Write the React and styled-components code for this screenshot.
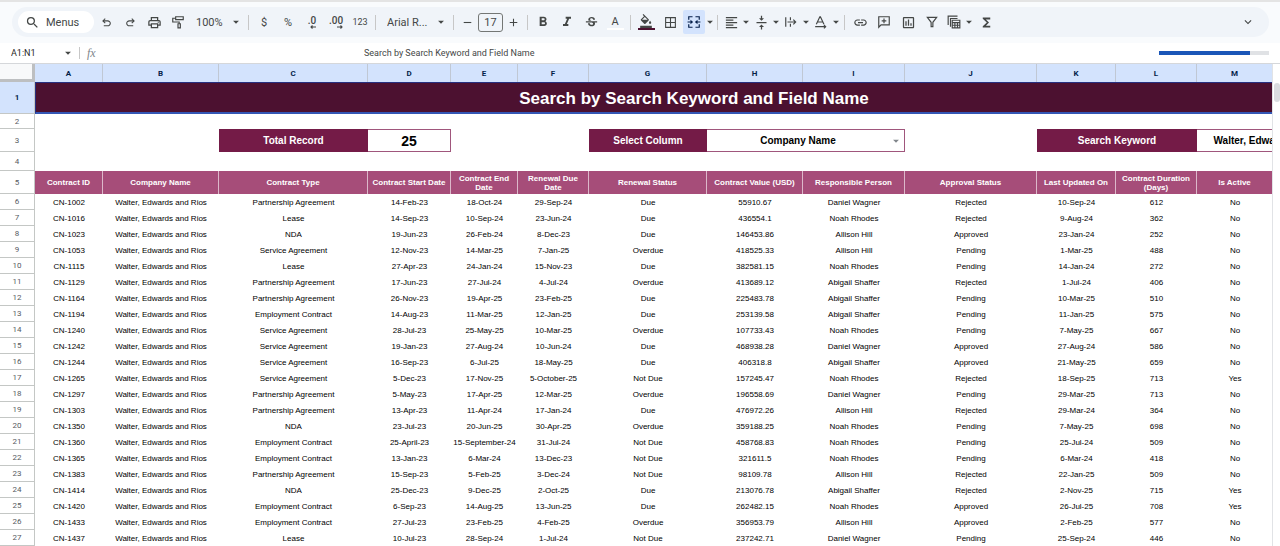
import React, { useState } from 'react'
import styled, { createGlobalStyle } from 'styled-components'
import {
    MdSearch, MdOutlinePrint, MdArrowDropDown, MdRemove, MdAdd,
    MdFormatBold, MdFormatItalic, MdStrikethroughS, MdFormatColorFill, MdFormatAlignLeft,
    MdVerticalAlignCenter, MdInsertLink, MdOutlineInsertChart,
    MdFunctions, MdExpandMore,
} from 'react-icons/md'

const columns = [
    { letter: 'A', width: 68, title: 'Contract ID' },
    { letter: 'B', width: 116, title: 'Company Name' },
    { letter: 'C', width: 149, title: 'Contract Type' },
    { letter: 'D', width: 83, title: 'Contract Start Date' },
    { letter: 'E', width: 67, title: 'Contract End Date' },
    { letter: 'F', width: 71, title: 'Renewal Due Date' },
    { letter: 'G', width: 118, title: 'Renewal Status' },
    { letter: 'H', width: 96, title: 'Contract Value (USD)' },
    { letter: 'I', width: 102, title: 'Responsible Person' },
    { letter: 'J', width: 132, title: 'Approval Status' },
    { letter: 'K', width: 79, title: 'Last Updated On' },
    { letter: 'L', width: 81, title: 'Contract Duration (Days)' },
    { letter: 'M', width: 76, title: 'Is Active' },
    { letter: '', width: 80, title: '' },
]

const company = 'Walter, Edwards and Rios'

const records = [
    ['CN-1002', 'Partnership Agreement', '14-Feb-23', '18-Oct-24', '29-Sep-24', 'Due', '55910.67', 'Daniel Wagner', 'Rejected', '10-Sep-24', '612', 'No'],
    ['CN-1016', 'Lease', '14-Sep-23', '10-Sep-24', '23-Jun-24', 'Due', '436554.1', 'Noah Rhodes', 'Rejected', '9-Aug-24', '362', 'No'],
    ['CN-1023', 'NDA', '19-Jun-23', '26-Feb-24', '8-Dec-23', 'Due', '146453.86', 'Allison Hill', 'Approved', '23-Jan-24', '252', 'No'],
    ['CN-1053', 'Service Agreement', '12-Nov-23', '14-Mar-25', '7-Jan-25', 'Overdue', '418525.33', 'Allison Hill', 'Pending', '1-Mar-25', '488', 'No'],
    ['CN-1115', 'Lease', '27-Apr-23', '24-Jan-24', '15-Nov-23', 'Due', '382581.15', 'Noah Rhodes', 'Pending', '14-Jan-24', '272', 'No'],
    ['CN-1129', 'Partnership Agreement', '17-Jun-23', '27-Jul-24', '4-Jul-24', 'Overdue', '413689.12', 'Abigail Shaffer', 'Rejected', '1-Jul-24', '406', 'No'],
    ['CN-1164', 'Partnership Agreement', '26-Nov-23', '19-Apr-25', '23-Feb-25', 'Due', '225483.78', 'Abigail Shaffer', 'Pending', '10-Mar-25', '510', 'No'],
    ['CN-1194', 'Employment Contract', '14-Aug-23', '11-Mar-25', '12-Jan-25', 'Due', '253139.58', 'Abigail Shaffer', 'Pending', '11-Jan-25', '575', 'No'],
    ['CN-1240', 'Service Agreement', '28-Jul-23', '25-May-25', '10-Mar-25', 'Overdue', '107733.43', 'Noah Rhodes', 'Pending', '7-May-25', '667', 'No'],
    ['CN-1242', 'Service Agreement', '19-Jan-23', '27-Aug-24', '10-Jun-24', 'Due', '468938.28', 'Daniel Wagner', 'Approved', '27-Aug-24', '586', 'No'],
    ['CN-1244', 'Service Agreement', '16-Sep-23', '6-Jul-25', '18-May-25', 'Due', '406318.8', 'Abigail Shaffer', 'Approved', '21-May-25', '659', 'No'],
    ['CN-1265', 'Service Agreement', '5-Dec-23', '17-Nov-25', '5-October-25', 'Not Due', '157245.47', 'Noah Rhodes', 'Rejected', '18-Sep-25', '713', 'Yes'],
    ['CN-1297', 'Partnership Agreement', '5-May-23', '17-Apr-25', '12-Mar-25', 'Overdue', '196558.69', 'Daniel Wagner', 'Pending', '29-Mar-25', '713', 'No'],
    ['CN-1303', 'Partnership Agreement', '13-Apr-23', '11-Apr-24', '17-Jan-24', 'Due', '476972.26', 'Allison Hill', 'Rejected', '29-Mar-24', '364', 'No'],
    ['CN-1350', 'NDA', '23-Jul-23', '20-Jun-25', '30-Apr-25', 'Overdue', '359188.25', 'Noah Rhodes', 'Pending', '7-May-25', '698', 'No'],
    ['CN-1360', 'Employment Contract', '25-April-23', '15-September-24', '31-Jul-24', 'Not Due', '458768.83', 'Noah Rhodes', 'Pending', '25-Jul-24', '509', 'No'],
    ['CN-1365', 'Employment Contract', '13-Jan-23', '6-Mar-24', '13-Dec-23', 'Not Due', '321611.5', 'Noah Rhodes', 'Pending', '6-Mar-24', '418', 'No'],
    ['CN-1383', 'Partnership Agreement', '15-Sep-23', '5-Feb-25', '3-Dec-24', 'Not Due', '98109.78', 'Allison Hill', 'Rejected', '22-Jan-25', '509', 'No'],
    ['CN-1414', 'NDA', '25-Dec-23', '9-Dec-25', '2-Oct-25', 'Due', '213076.78', 'Abigail Shaffer', 'Rejected', '2-Nov-25', '715', 'Yes'],
    ['CN-1420', 'Employment Contract', '6-Sep-23', '14-Aug-25', '13-Jun-25', 'Due', '262482.15', 'Noah Rhodes', 'Approved', '26-Jul-25', '708', 'Yes'],
    ['CN-1433', 'Employment Contract', '27-Jul-23', '23-Feb-25', '4-Feb-25', 'Overdue', '356953.79', 'Allison Hill', 'Approved', '2-Feb-25', '577', 'No'],
    ['CN-1437', 'Lease', '10-Jul-23', '28-Sep-24', '1-Jul-24', 'Not Due', '237242.71', 'Daniel Wagner', 'Pending', '25-Sep-24', '446', 'No'],
]

const UndoIcon = () => (
    <svg viewBox="0 -960 960 960" width="13" height="13" fill="currentColor">
        <path d="M280-200v-80h284q63 0 109.5-40T720-420q0-60-46.5-100T564-560H312l104 104-56 56-200-200 200-200 56 56-104 104h252q97 0 166.5 63T800-420q0 94-69.5 157T564-200H280Z" />
    </svg>
)

const RedoIcon = () => (
    <svg viewBox="0 -960 960 960" width="13" height="13" fill="currentColor">
        <path d="M396-200q-97 0-166.5-63T160-420q0-94 69.5-157T396-640h252L544-744l56-56 200 200-200 200-56-56 104-104H396q-63 0-109.5 40T240-420q0 60 46.5 100T396-280h284v80H396Z" />
    </svg>
)

const LineIcon = ({ size = 14, stroke = 2, children }) => (
    <svg viewBox="0 0 24 24" width={size} height={size} fill="none" stroke="currentColor" strokeWidth={stroke}>
        {children}
    </svg>
)

const PaintIcon = () => (
    <LineIcon><path d="M8 3h13v5H8zM8 5.500H3V12h11v3M12 15h4v7h-4z" /></LineIcon>
)

const BordersIcon = () => (
    <LineIcon size={13}><path d="M3 3h18v18H3zM12 3v18M3 12h18" /></LineIcon>
)

const MergeIcon = () => (
    <LineIcon>
        <path d="M9.500 3H3v5M14.500 3H21v5M9.500 21H3v-5M14.500 21H21v-5M1 12h6M23 12h-6" />
        <path d="M6 8l4.500 4L6 16zM18 8l-4.500 4 4.500 4z" fill="currentColor" stroke="none" />
    </LineIcon>
)

const WrapIcon = () => (
    <LineIcon><path d="M3 4v16M11 4v5M11 15v5M6 12h14M16 8l4 4-4 4" /></LineIcon>
)

const RotateIcon = () => (
    <LineIcon>
        <path d="M4 16L10 3h1l6 13M6 12h9M2 20h18M17 17l3 3-3 3" />
    </LineIcon>
)

const CommentIcon = () => (
    <LineIcon><path d="M3 21V3h18v14H7zM12 6v8M8 10h8" /></LineIcon>
)

const FilterIcon = () => (
    <LineIcon><path d="M4 4h16l-6.500 8.500V20h-3v-7.500z" /></LineIcon>
)

const TableViewIcon = () => (
    <LineIcon>
        <path d="M2 17V2h16M6 20V6h12M9 9h13v13H9zM9 13h13M9 17.500h13M13.500 13v9M18 13v9" />
    </LineIcon>
)

const DecimalIcon = ({ text, right }) => (
    <Decimal>
        {text}
        <svg viewBox="0 0 12 8" width="6" height="4" fill="none" stroke="currentColor" strokeWidth="2.200">
            <path d={right ? 'M0 4h10M7 1l3 3-3 3' : 'M12 4H2M5 1L2 4l3 3'} />
        </svg>
    </Decimal>
)

const Split = ({ label, icon }) => (
    <SplitTool>
        <ToolButton $width={20} aria-label={label}>{icon}</ToolButton>
        <ToolButton $width={9} aria-label={`${label} options`}><MdArrowDropDown size={14} /></ToolButton>
    </SplitTool>
)

function Toolbar() {
    return (
        <ToolbarArea>
            <Pill>
                <MenuSearch><MdSearch size={15} />Menus</MenuSearch>
                <ToolButton aria-label="Undo"><UndoIcon /></ToolButton>
                <ToolButton aria-label="Redo"><RedoIcon /></ToolButton>
                <ToolButton aria-label="Print"><MdOutlinePrint size={15} /></ToolButton>
                <ToolButton aria-label="Paint format"><PaintIcon /></ToolButton>
                <SelectBox $width={55}>
                    <select aria-label="Zoom"><option>100%</option></select>
                    <MdArrowDropDown size={14} />
                </SelectBox>
                <Divider />
                <ToolButton>$</ToolButton>
                <ToolButton>%</ToolButton>
                <ToolButton aria-label="Decrease decimal places"><DecimalIcon text=".0" /></ToolButton>
                <ToolButton aria-label="Increase decimal places"><DecimalIcon text=".00" right /></ToolButton>
                <ToolButton $size={9}>123</ToolButton>
                <Divider />
                <SelectBox $width={71} $inset={8}>
                    <select aria-label="Font"><option>Arial R...</option></select>
                    <MdArrowDropDown size={14} />
                </SelectBox>
                <Divider />
                <ToolButton $width={21} aria-label="Decrease font size"><MdRemove size={13} /></ToolButton>
                <SizeInput aria-label="Font size" defaultValue="17" />
                <ToolButton $width={21} aria-label="Increase font size"><MdAdd size={13} /></ToolButton>
                <Divider />
                <ToolButton aria-label="Bold"><MdFormatBold size={16} /></ToolButton>
                <ToolButton aria-label="Italic"><MdFormatItalic size={16} /></ToolButton>
                <ToolButton aria-label="Strikethrough"><MdStrikethroughS size={15} /></ToolButton>
                <ToolButton aria-label="Text color"><Swatch $color="#ffffff">A</Swatch></ToolButton>
                <Divider />
                <ToolButton aria-label="Fill color"><Swatch $color="#4c1130"><MdFormatColorFill size={14} /></Swatch></ToolButton>
                <ToolButton aria-label="Borders"><BordersIcon /></ToolButton>
                <MergeTool>
                    <ToolButton $width={22} $active aria-label="Merge cells"><MergeIcon /></ToolButton>
                    <ToolButton $width={9} aria-label="Merge type"><MdArrowDropDown size={14} /></ToolButton>
                </MergeTool>
                <Divider />
                <Split label="Horizontal align" icon={<MdFormatAlignLeft size={15} />} />
                <Split label="Vertical align" icon={<MdVerticalAlignCenter size={15} />} />
                <Split label="Text wrapping" icon={<WrapIcon />} />
                <Split label="Text rotation" icon={<RotateIcon />} />
                <Divider />
                <ToolButton aria-label="Insert link"><MdInsertLink size={15} /></ToolButton>
                <ToolButton aria-label="Insert comment"><CommentIcon /></ToolButton>
                <ToolButton aria-label="Insert chart"><MdOutlineInsertChart size={15} /></ToolButton>
                <ToolButton aria-label="Create a filter"><FilterIcon /></ToolButton>
                <Split label="Filter views" icon={<TableViewIcon />} />
                <ToolButton aria-label="Functions"><MdFunctions size={15} /></ToolButton>
                <Spacer />
                <ToolButton $width={42} aria-label="Hide the menus"><MdExpandMore size={14} /></ToolButton>
            </Pill>
        </ToolbarArea>
    )
}

function FormulaBar() {
    const [formula, setFormula] = useState('Search by Search Keyword and Field Name')
    return (
        <FormulaRow>
            <NameBox aria-label="Name box" defaultValue="A1:N1" />
            <ToolButton $width={16} aria-label="Named ranges"><MdArrowDropDown size={14} /></ToolButton>
            <FormulaDivider />
            <Fx>fx</Fx>
            <FormulaInput aria-label="Formula" value={formula} onChange={e => setFormula(e.target.value)} />
            <Progress role="progressbar" aria-label="Calculating"><ProgressFill /></Progress>
        </FormulaRow>
    )
}

function Sheet() {
    return (
        <SheetArea>
            <GridView>
                <Grid>
                    <colgroup>
                        <col style={{ width: 35 }} />
                        {columns.map((c, i) => <col key={i} style={{ width: c.width }} />)}
                    </colgroup>
                    <thead>
                        <Row $height={18}>
                            <Corner />
                            {columns.map((c, i) => <ColumnHead key={i} scope="col">{c.letter}</ColumnHead>)}
                        </Row>
                    </thead>
                    <tbody>
                        <Row $height={32}>
                            <RowHead scope="row" $active>1</RowHead>
                            <TitleCell colSpan={14}>Search by Search Keyword and Field Name</TitleCell>
                        </Row>
                        <Row $height={15}>
                            <RowHead scope="row">2</RowHead>
                            <Cell colSpan={14} />
                        </Row>
                        <Row $height={23}>
                            <RowHead scope="row">3</RowHead>
                            <Cell colSpan={2} />
                            <LabelCell>Total Record</LabelCell>
                            <ValueCell $size={14}>25</ValueCell>
                            <Cell colSpan={2} />
                            <LabelCell><label htmlFor="field">Select Column</label></LabelCell>
                            <ValueCell colSpan={2}>
                                <CellSelect>
                                    <select id="field"><option>Company Name</option></select>
                                    <MdArrowDropDown size={14} />
                                </CellSelect>
                            </ValueCell>
                            <Cell />
                            <LabelCell colSpan={2}>Search Keyword</LabelCell>
                            <ValueCell colSpan={2}>{company}</ValueCell>
                        </Row>
                        <Row $height={19}>
                            <RowHead scope="row">4</RowHead>
                            <Cell colSpan={14} />
                        </Row>
                        <Row $height={23}>
                            <RowHead scope="row">5</RowHead>
                            {columns.map((c, i) => <FieldHead key={i}>{c.title}</FieldHead>)}
                        </Row>
                        {records.map(([id, ...rest], i) => (
                            <Row key={id} $height={16}>
                                <RowHead scope="row">{i + 6}</RowHead>
                                <Cell>{id}</Cell>
                                <Cell>{company}</Cell>
                                {rest.map((value, j) => <Cell key={j}>{value}</Cell>)}
                                <Cell />
                            </Row>
                        ))}
                    </tbody>
                </Grid>
            </GridView>
            <ScrollTrack>
                <ScrollThumb />
            </ScrollTrack>
        </SheetArea>
    )
}

function App() {
    return (
        <Page>
            <GlobalStyle />
            <Toolbar />
            <FormulaBar />
            <Sheet />
        </Page>
    )
}

export default App

const GlobalStyle = createGlobalStyle`
    * {
        box-sizing: border-box;
    }

    body {
        margin: 0;
        overflow: hidden;
    }

    button, input, select {
        border: none;
        margin: 0;
        padding: 0;
        background: transparent;
        color: inherit;
        font: inherit;
        outline: none;
    }

    select {
        appearance: none;
    }

    svg {
        display: block;
        flex: none;
    }
`

const Page = styled.div`
    display: flex;
    flex-direction: column;
    height: 100vh;
    background: #ffffff;
    color: #444746;
    font-family: Roboto, "Liberation Sans", sans-serif;
`

const ToolbarArea = styled.header`
    padding: 5px 11px 6px 12px;
    background: #f9fbfd;
    border-top: 2px solid #e4e4e4;
`

const Pill = styled.div`
    display: flex;
    align-items: center;
    height: 30px;
    padding-left: 6px;
    border-radius: 15px;
    background: #f0f4f9;
`

const MenuSearch = styled.button`
    display: flex;
    align-items: center;
    gap: 6px;
    width: 76px;
    height: 22px;
    padding-left: 7px;
    border-radius: 11px;
    background: #ffffff;
    font-size: 11px;
`

const ToolButton = styled.button`
    display: flex;
    align-items: center;
    justify-content: center;
    flex: none;
    width: ${props => props.$width || 24}px;
    height: 24px;
    border-radius: 2px;
    font-size: ${props => props.$size || 11}px;
    background: ${props => props.$active ? '#d3e3fd' : 'transparent'};
    color: ${props => props.$active ? '#041e49' : '#444746'};
`

const SplitTool = styled.div`
    display: flex;
    margin-right: 1px;
`

const MergeTool = styled.div`
    display: flex;
    padding-left: 1px;
`

const SelectBox = styled.div`
    display: flex;
    align-items: center;
    width: ${props => props.$width}px;
    height: 24px;
    padding: 0 2px 0 ${props => props.$inset || 6}px;
    font-size: 11px;

    select {
        flex: 1;
        min-width: 0;
    }
`

const Divider = styled.span`
    width: 1px;
    height: 15px;
    margin: 0 3px;
    background: #c7c7c7;
`

const Decimal = styled.span`
    display: flex;
    flex-direction: column;
    align-items: flex-end;
    font-size: 10px;
    font-weight: 500;
    line-height: 9px;
`

const SizeInput = styled.input`
    width: 25px;
    height: 19px;
    border: 1px solid #747775;
    border-radius: 3px;
    font-size: 11px;
    text-align: center;
`

const Swatch = styled.span`
    display: flex;
    align-items: center;
    justify-content: center;
    width: 17px;
    height: 16px;
    border-bottom: 2px solid ${props => props.$color};
`

const Spacer = styled.span`
    flex: 1;
`

const FormulaRow = styled.div`
    display: flex;
    align-items: center;
    height: 21px;
    padding-right: 11px;
    border-bottom: 1px solid #d5d7da;
    font-size: 9px;
`

const NameBox = styled.input`
    width: 60px;
    padding-left: 11px;
    color: #1f1f1f;
`

const FormulaDivider = styled.span`
    width: 1px;
    height: 12px;
    margin: 0 7px 0 3px;
    background: #c7c7c7;
`

const Fx = styled.span`
    width: 20px;
    color: #80868b;
    font-family: "Liberation Serif", serif;
    font-size: 12px;
    font-style: italic;
`

const FormulaInput = styled.input`
    flex: 1;
    padding-left: 257px;
`

const Progress = styled.div`
    width: 110px;
    height: 4px;
    background: #e0e2e5;
`

const ProgressFill = styled.div`
    width: 83%;
    height: 100%;
    background: #1a56b8;
`

const SheetArea = styled.main`
    display: flex;
    flex: 1;
    min-height: 0;
`

const GridView = styled.div`
    flex: 1;
    min-width: 0;
    overflow: hidden;
`

const Grid = styled.table`
    width: 1353px;
    table-layout: fixed;
    border-collapse: separate;
    border-spacing: 0;
    font-family: "Liberation Sans", Arial, sans-serif;
    font-size: 8px;
    line-height: 9px;
    color: #000000;

    td, th {
        padding: 0;
        text-align: center;
        vertical-align: middle;
    }
`

const Row = styled.tr`
    height: ${props => props.$height}px;
`

const Corner = styled.td`
    background: #f8f9fa;
    border-right: 3px solid #bdbfc1;
    border-bottom: 3px solid #bdbfc1;
`

const ColumnHead = styled.th`
    background: #d3e3fd;
    border-right: 1px solid #c0c8d4;
    color: #041e49;
    font-family: Roboto, sans-serif;
    font-weight: 700;
`

const RowHead = styled.th`
    background: ${props => props.$active ? '#d3e3fd' : '#ffffff'};
    border-right: 1px solid #c4c7c5;
    border-bottom: 1px solid #c4c7c5;
    color: ${props => props.$active ? '#041e49' : '#575b5f'};
    font-family: Roboto, sans-serif;
    font-weight: ${props => props.$active ? 700 : 400};
`

const Cell = styled.td`
    white-space: nowrap;
`

const TitleCell = styled.td`
    background: #4c1130;
    border: 1px solid #27307f;
    border-bottom: 2px solid #3457b5;
    color: #ffffff;
    font-size: 17px;
    font-weight: 700;
    line-height: 22px;

    && {
        padding-top: 2px;
    }
`

const LabelCell = styled.td`
    background: #741b47;
    border: 1px solid #741b47;
    color: #ffffff;
    font-size: 10px;
    font-weight: 700;
    white-space: nowrap;
`

const ValueCell = styled.td`
    border: 1px solid #a0567c;
    border-left: none;
    font-size: ${props => props.$size || 10}px;
    font-weight: 700;
    line-height: 14px;
    white-space: nowrap;
`

const CellSelect = styled.div`
    display: flex;
    align-items: center;
    padding: 0 1px 0 0;

    select {
        flex: 1;
        height: 16px;
        line-height: 16px;
        text-align: center;
        text-align-last: center;
    }

    svg {
        color: #80868b;
    }
`

const FieldHead = styled.th`
    background: #a64d79;
    border-right: 1px solid #dcb8ca;
    color: #ffffff;
    font-weight: 700;

    && {
        padding: 0 3px;
    }
`

const ScrollTrack = styled.div`
    width: 8px;
    padding: 19px 0 0 1px;
    border-left: 1px solid #e1e3e6;
    background: #ffffff;
`

const ScrollThumb = styled.div`
    height: 19px;
    border-radius: 4px;
    background: #dadce0;
`
